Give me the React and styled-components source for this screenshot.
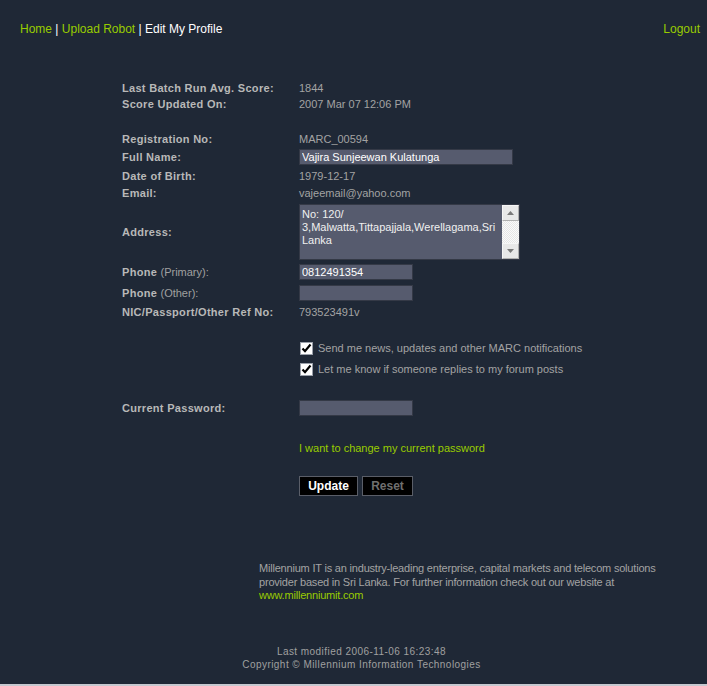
import React from "react";
import styled, { createGlobalStyle } from "styled-components";

const GlobalStyle = createGlobalStyle`
  html, body {
    margin: 0;
    padding: 0;
    background: #1f2836;
  }
  body {
    font-family: "Liberation Sans", Arial, sans-serif;
    font-size: 11px;
    color: #a6a6a6;
  }
`;

const Page = styled.div`
  min-height: 684px;
  border-bottom: 2px solid #c6c8d0;
  box-sizing: content-box;
  display: flex;
  flex-direction: column;
`;

const TopBar = styled.div`
  display: flex;
  justify-content: space-between;
  align-items: center;
  padding: 21px 7px 0 20px;
  height: 16px;
  font-size: 12px;
  color: #ffffff;
`;

const NavLink = styled.a`
  color: #99cc00;
  text-decoration: none;
`;

const Form = styled.div`
  margin-top: 43px;
  padding-left: 122px;
  display: flex;
  flex-direction: column;
`;

const Row = styled.div`
  display: grid;
  grid-template-columns: 177px 1fr;
  align-items: center;
  height: ${(p) => p.$h || 16}px;
  margin-top: ${(p) => p.$mt || 0}px;
`;

const Label = styled.div`
  font-weight: bold;
  letter-spacing: 0.3px;
  color: #b8b8b8;
  span {
    font-weight: normal;
    letter-spacing: 0;
    color: #a0a0a0;
  }
`;

const Value = styled.div`
  color: #a3a3a3;
`;

const Input = styled.input`
  box-sizing: border-box;
  width: ${(p) => p.$w}px;
  height: 16px;
  padding: 0 2px;
  border: 1px solid #343946;
  background: #565b6e;
  color: #ffffff;
  font-family: "Liberation Sans", Arial, sans-serif;
  font-size: 11px;
  outline: none;
`;

const TextBox = styled.div`
  box-sizing: border-box;
  width: 221px;
  height: 56px;
  border: 1px solid #343946;
  background: #565b6e;
  display: flex;
`;

const TextArea = styled.textarea`
  flex: 1;
  border: none;
  background: transparent;
  color: #f0f0f0;
  font-family: "Liberation Sans", Arial, sans-serif;
  font-size: 11px;
  line-height: 13px;
  padding: 3px 2px 0 2px;
  resize: none;
  overflow: hidden;
  outline: none;
`;

const ScrollBar = styled.div`
  width: 17px;
  display: flex;
  flex-direction: column;
  background: repeating-conic-gradient(#e6e6e6 0% 25%, #fafafa 0% 50%) 0 0 / 2px 2px;
`;

const ScrollButton = styled.div`
  height: 16px;
  background: #e8e8e8;
  border: 1px solid #f6f6f6;
  border-right-color: #b0b0b0;
  border-bottom-color: #b0b0b0;
  box-sizing: border-box;
  display: flex;
  align-items: center;
  justify-content: center;
`;

const Track = styled.div`
  flex: 1;
`;

const CheckRow = styled.label`
  grid-column: 2;
  display: flex;
  align-items: center;
  gap: 5px;
  color: #a3a3a3;
`;

const Box = styled.span`
  width: 13px;
  height: 13px;
  box-sizing: border-box;
  background: #ffffff;
  border: 1px solid #9aa0aa;
  display: flex;
  align-items: center;
  justify-content: center;
  margin-left: 1px;
`;

const Link = styled.a`
  grid-column: 2;
  color: #99cc00;
  text-decoration: none;
`;

const Buttons = styled.div`
  grid-column: 2;
  display: flex;
  gap: 4px;
`;

const Button = styled.button`
  box-sizing: border-box;
  height: 20px;
  width: ${(p) => p.$w}px;
  background: #000000;
  border: 1px solid #5a5e68;
  color: ${(p) => (p.$muted ? "#6f6f6f" : "#ffffff")};
  font-family: "Liberation Sans", Arial, sans-serif;
  font-size: 12px;
  font-weight: bold;
  padding: 0;
`;

const About = styled.p`
  margin: 66px 0 0 259px;
  width: 412px;
  line-height: 13.5px;
  letter-spacing: -0.2px;
  color: #a3a3a3;
  a {
    color: #99cc00;
    text-decoration: none;
  }
`;

const Credits = styled.div`
  margin-top: 42px;
  padding-left: 16px;
  text-align: center;
  font-size: 10px;
  letter-spacing: 0.45px;
  line-height: 13px;
  color: #a0a0a0;
`;

const Arrow = ({ up }) => (
  <svg width="7" height="4" viewBox="0 0 7 4">
    <path d={up ? "M0 4 L3.5 0 L7 4 Z" : "M0 0 L3.5 4 L7 0 Z"} fill="#7a7a7a" />
  </svg>
);

const Tick = () => (
  <svg width="11" height="11" viewBox="0 0 11 11">
    <path d="M1.5 5.5 L4 8.2 L9.5 1.5" fill="none" stroke="#000" strokeWidth="2.2" />
  </svg>
);

const App = () => {
  return (
    <>
      <GlobalStyle />
      <Page>
        <TopBar>
          <div>
            <NavLink href="#">Home</NavLink> | <NavLink href="#">Upload Robot</NavLink> | Edit My Profile
          </div>
          <NavLink href="#">Logout</NavLink>
        </TopBar>

        <Form>
          <Row>
            <Label>Last Batch Run Avg. Score:</Label>
            <Value>1844</Value>
          </Row>
          <Row>
            <Label>Score Updated On:</Label>
            <Value>2007 Mar 07 12:06 PM</Value>
          </Row>
          <Row $mt={19}>
            <Label>Registration No:</Label>
            <Value>MARC_00594</Value>
          </Row>
          <Row $mt={1} $h={18}>
            <Label>Full Name:</Label>
            <div>
              <Input $w={214} defaultValue="Vajira Sunjeewan Kulatunga" />
            </div>
          </Row>
          <Row $mt={2}>
            <Label>Date of Birth:</Label>
            <Value>1979-12-17</Value>
          </Row>
          <Row $mt={1}>
            <Label>Email:</Label>
            <Value>vajeemail@yahoo.com</Value>
          </Row>
          <Row $mt={3} $h={56}>
            <Label>Address:</Label>
            <TextBox>
              <TextArea defaultValue="No: 120/ 3,Malwatta,Tittapajjala,Werellagama,Sri Lanka" />
              <ScrollBar>
                <ScrollButton>
                  <Arrow up />
                </ScrollButton>
                <Track />
                <ScrollButton>
                  <Arrow />
                </ScrollButton>
              </ScrollBar>
            </TextBox>
          </Row>
          <Row $mt={3} $h={18}>
            <Label>
              Phone <span>(Primary):</span>
            </Label>
            <div>
              <Input $w={114} defaultValue="0812491354" />
            </div>
          </Row>
          <Row $mt={3} $h={18}>
            <Label>
              Phone <span>(Other):</span>
            </Label>
            <div>
              <Input $w={114} defaultValue="" />
            </div>
          </Row>
          <Row $mt={2}>
            <Label>NIC/Passport/Other Ref No:</Label>
            <Value>793523491v</Value>
          </Row>
          <Row $mt={20}>
            <CheckRow>
              <Box>
                <Tick />
              </Box>
              Send me news, updates and other MARC notifications
            </CheckRow>
          </Row>
          <Row $mt={5}>
            <CheckRow>
              <Box>
                <Tick />
              </Box>
              Let me know if someone replies to my forum posts
            </CheckRow>
          </Row>
          <Row $mt={22} $h={18}>
            <Label>Current Password:</Label>
            <div>
              <Input $w={114} type="password" defaultValue="" />
            </div>
          </Row>
          <Row $mt={23}>
            <Link href="#">I want to change my current password</Link>
          </Row>
          <Row $mt={20} $h={20}>
            <Buttons>
              <Button $w={59}>Update</Button>
              <Button $w={51} $muted>
                Reset
              </Button>
            </Buttons>
          </Row>
        </Form>

        <About>
          Millennium IT is an industry-leading enterprise, capital markets and telecom solutions
          provider based in Sri Lanka. For further information check out our website at{" "}
          <a href="#">www.millenniumit.com</a>
        </About>

        <Credits>
          Last modified 2006-11-06 16:23:48
          <br />
          Copyright © Millennium Information Technologies
        </Credits>
      </Page>
    </>
  );
};

export default App;
